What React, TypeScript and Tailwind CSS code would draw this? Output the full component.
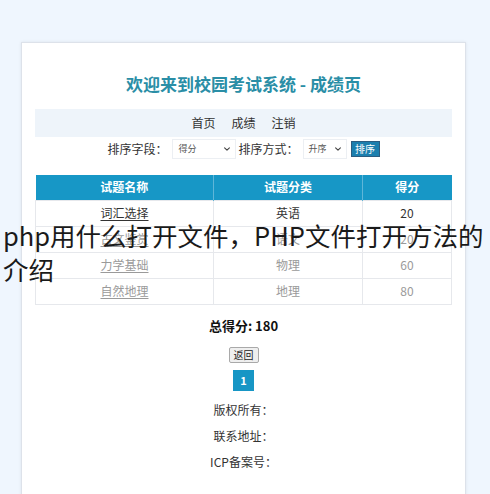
import React from 'react';

const rows = [
  { name: '词汇选择', type: '英语', score: 20, dim: false },
  { name: '古文鉴赏', type: '语文', score: 20, dim: true },
  { name: '力学基础', type: '物理', score: 60, dim: true },
  { name: '自然地理', type: '地理', score: 80, dim: true },
];

const Chevron = () => (
  <svg viewBox="0 0 10 10" className="w-[8px] h-[8px]" fill="none">
    <path d="M2 3.5L5 6.5L8 3.5" stroke="#444" strokeWidth="1.4" strokeLinecap="round" strokeLinejoin="round" />
  </svg>
);

const App = () => {
  return (
    <div
      className="relative w-[490px] h-[494px] overflow-hidden bg-[#eff6fe] pt-[42px] pl-[21px] pr-[24px]"
      style={{ fontFamily: '"Noto Sans CJK SC", "Noto Sans", sans-serif' }}
    >
      {/* main card */}
      <div className="bg-white border border-[#dde2ea] shadow-[0_0_3px_rgba(0,0,0,0.08)] px-[13px] pt-[29px] pb-[20px] min-h-[460px]">
        <h1 className="text-center text-[17px] leading-[24px] font-bold text-[#2a8ea6]">
          欢迎来到校园考试系统 - 成绩页
        </h1>

        {/* nav */}
        <div className="mt-[13px] h-[28px] bg-[#eef4fa] flex items-center justify-center gap-[16px] text-[12px] text-[#333]">
          <span>首页</span>
          <span>成绩</span>
          <span>注销</span>
        </div>

        {/* sort controls */}
        <div className="h-[22px] mt-[1px] flex items-center justify-center text-[12px] text-[#333]">
          <span className="mr-[4px]">排序字段：</span>
          <div className="w-[64px] h-[20px] bg-white border border-[#eceff3] flex items-center justify-between pl-[6px] pr-[4px] text-[9px] text-[#555]">
            <span>得分</span>
            <Chevron />
          </div>
          <span className="ml-[3px] mr-[4px]">排序方式：</span>
          <div className="w-[44px] h-[20px] bg-white border border-[#eceff3] flex items-center justify-between pl-[5px] pr-[4px] text-[9px] text-[#555]">
            <span>升序</span>
            <Chevron />
          </div>
          <button className="ml-[4px] h-[16px] w-[29px] bg-[#1c7fae] border border-[#2c5c80] text-white text-[10px] leading-none">
            排序
          </button>
        </div>

        {/* scores table */}
        <table className="mt-[15px] w-full border-collapse text-[12px]">
          <thead>
            <tr className="h-[25px] bg-[#1797c6] text-white font-bold">
              <th className="w-[178px] border-r border-[#5fb6d8]">试题名称</th>
              <th className="w-[149px] border-r border-[#5fb6d8]">试题分类</th>
              <th>得分</th>
            </tr>
          </thead>
          <tbody>
            {rows.map((r) => (
              <tr
                key={r.name}
                className={`h-[26px] border border-[#e6e8ec] text-center ${r.dim ? 'text-[#9a9a9a]' : 'text-[#333]'}`}
              >
                <td className="border-r border-[#e6e8ec]">
                  <span className="underline underline-offset-2">{r.name}</span>
                </td>
                <td className="border-r border-[#e6e8ec]">{r.type}</td>
                <td>{r.score}</td>
              </tr>
            ))}
          </tbody>
        </table>

        <div className="mt-[11px] text-center text-[13px] font-bold text-[#111] leading-[20px]">总得分: 180</div>

        <div className="mt-[11px] flex justify-center">
          <button className="h-[16px] px-[4px] bg-[#efefef] border border-[#a9a9a9] rounded-[2px] text-[10px] leading-none text-[#222]">
            返回
          </button>
        </div>

        <div className="mt-[7px] flex justify-center">
          <div className="w-[21px] h-[21px] bg-[#1796c5] text-white text-[11px] font-bold flex items-center justify-center">1</div>
        </div>

        <div className="mt-[10px] flex flex-col items-center gap-[8px] text-[12px] text-[#333] leading-[18px]">
          <span>版权所有：</span>
          <span>联系地址：</span>
          <span>ICP备案号：</span>
        </div>
      </div>

      {/* caption overlay */}
      <div className="absolute left-[3px] top-[218px] text-[25.5px] leading-[34px] text-[#1a1a1a] whitespace-nowrap">
        <div>php用什么打开文件，PHP文件打开方法的</div>
        <div>介绍</div>
      </div>
    </div>
  );
};

export default App;
